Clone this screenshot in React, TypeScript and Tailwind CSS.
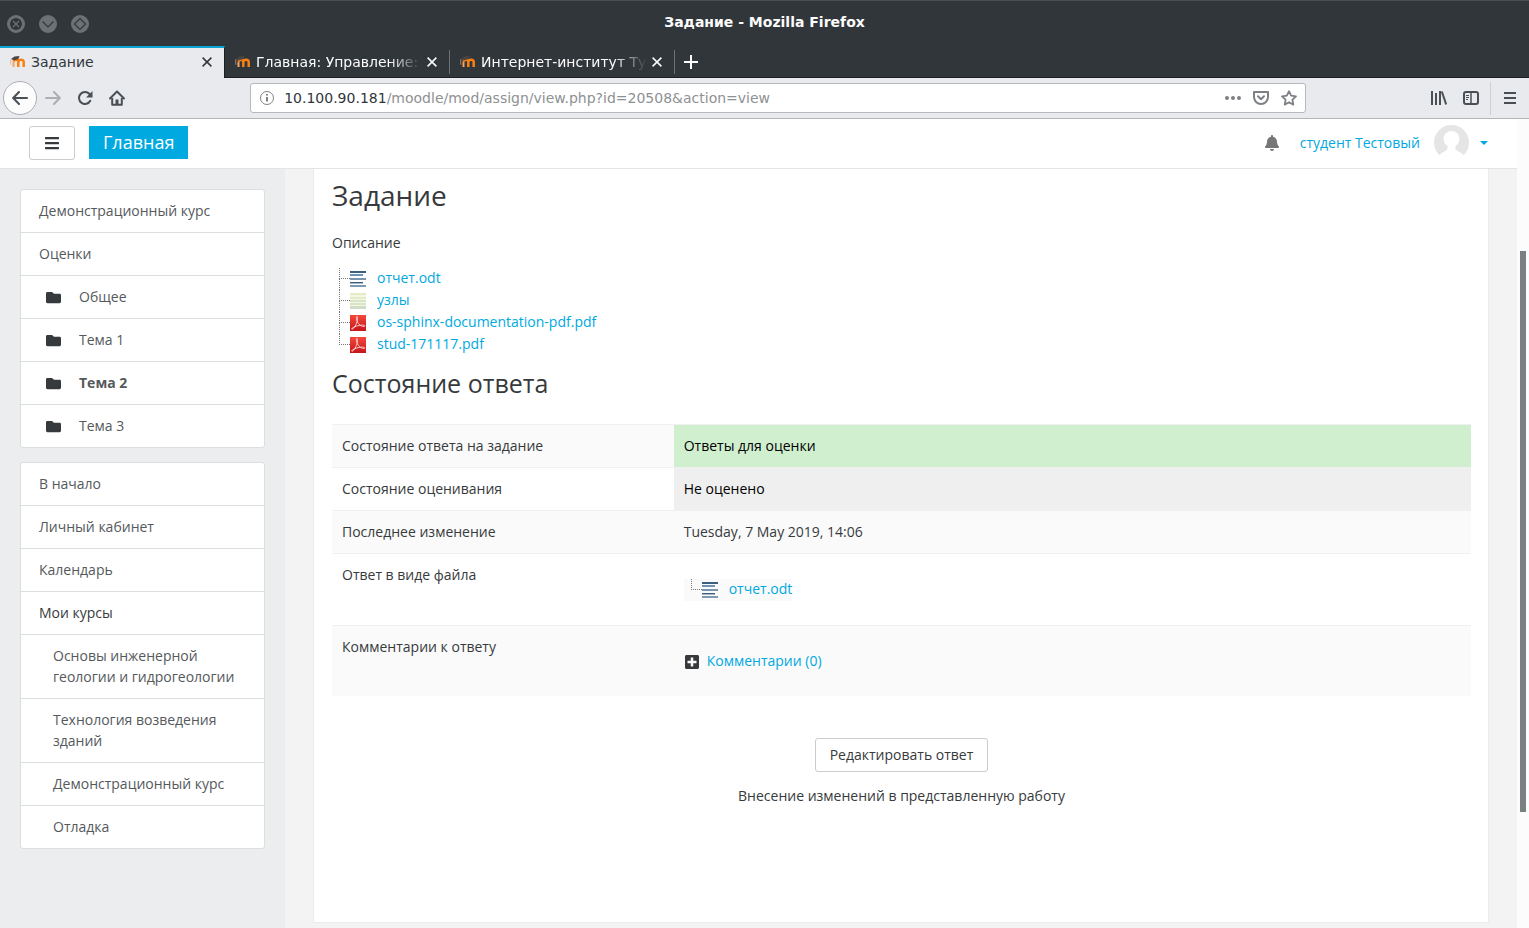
import { useState } from "react";
import type { ReactNode } from "react";
import { FaBars, FaBell, FaFolder, FaPlusSquare } from "react-icons/fa";

const tabs = [
  { title: "Задание", active: true },
  { title: "Главная: Управление:", active: false },
  { title: "Интернет-институт Ту", active: false },
];

const courseNav = [
  { title: "Демонстрационный курс" },
  { title: "Оценки" },
  { title: "Общее", folder: true },
  { title: "Тема 1", folder: true },
  { title: "Тема 2", folder: true, bold: true },
  { title: "Тема 3", folder: true },
];

const siteNav = [
  { title: "В начало" },
  { title: "Личный кабинет" },
  { title: "Календарь" },
  { title: "Мои курсы", dark: true },
  { title: "Основы инженерной геологии и гидрогеологии", nested: true },
  { title: "Технология возведения зданий", nested: true },
  { title: "Демонстрационный курс", nested: true },
  { title: "Отладка", nested: true },
];

type NavItem = { title: string; folder?: boolean; bold?: boolean; nested?: boolean; dark?: boolean };
type FileItem = { name: string; kind: "text" | "sheet" | "pdf" };

const files: FileItem[] = [
  { name: "отчет.odt", kind: "text" },
  { name: "узлы", kind: "sheet" },
  { name: "os-sphinx-documentation-pdf.pdf", kind: "pdf" },
  { name: "stud-171117.pdf", kind: "pdf" },
];

function WindowButton({ label, children }: { label: string; children: ReactNode }) {
  return (
    <button type="button" aria-label={label}>
      <svg width="18" height="18" viewBox="0 0 18 18" fill="none" stroke="#31363b" strokeWidth="1.2">
        {children}
      </svg>
    </button>
  );
}

function Favicon() {
  return (
    <svg width="16" height="16" viewBox="0 0 16 16" fill="none" className="shrink-0">
      <path d="M3.500 13V7.500" stroke="#f9a35c" strokeWidth="2" />
      <path d="M8.300 13V7.600C8.300 5.200 4 5 3.800 7.600M8.300 7.800c.2-2.800 5.400-2.800 5.400.2v5" stroke="#f98012" strokeWidth="2.500" />
      <path d="M1 5L4.500 2.600l5-.6-1.300 3.200L4 6.200z" fill="#4a4543" />
      <path d="M.9 5.200c-.4 1.800-.4 3.600 0 5.600" stroke="#c9ab92" strokeWidth=".7" />
    </svg>
  );
}

function CloseIcon() {
  return (
    <svg width="10" height="10" viewBox="0 0 10 10" stroke="currentColor" strokeWidth="1.5">
      <path d="M.6.6l8.800 8.800M9.400.6L.6 9.400" />
    </svg>
  );
}

function FileIcon({ kind }: { kind: FileItem["kind"] }) {
  if (kind === "pdf") {
    return (
      <svg width="16" height="16" viewBox="0 0 16 16" className="shrink-0">
        <defs>
          <linearGradient id="pdf" x1="0" y1="0" x2="0" y2="1">
            <stop offset="0" stopColor="#f5483c" />
            <stop offset="1" stopColor="#c4161c" />
          </linearGradient>
        </defs>
        <path d="M0 0h16v16H0z" fill="url(#pdf)" />
        <path
          d="M6.800 1.500c-.9.300-.2 3.500.6 5.300 1.200 2.700 4.200 4.900 6.800 4.700 1.200-.2.700-1.400-1.500-1.400-3.600 0-8.200 1.300-10.500 3-1 .9-.3 1.700.7.800C5 12.200 7.400 7.500 7.500 3.500c0-1.300-.2-2.100-.7-2z"
          fill="none"
          stroke="#fbd5d2"
          strokeWidth=".9"
        />
      </svg>
    );
  }
  if (kind === "sheet") {
    return (
      <svg width="16" height="16" viewBox="0 0 16 16" className="shrink-0">
        <path d="M0 0h16v16H0z" fill="#f3f7e6" />
        <path d="M0 0h16v2H0zM0 4h16v2H0z" fill="#e3ebc6" />
        <path d="M0 7h16v2H0zM0 10h16v2H0z" fill="#d9e3c6" />
        <path d="M0 13h16v3H0z" fill="#cfdcc8" />
      </svg>
    );
  }
  return (
    <svg width="16" height="16" viewBox="0 0 16 16" className="shrink-0">
      <path d="M0 0h16v2H0zM0 11h13v1H0z" fill="#3a5f80" />
      <path d="M0 3h13v2H0z" fill="#6f93b4" />
      <path d="M0 7h16v2H0z" fill="#7895ad" />
      <path d="M0 14h16v2H0z" fill="#7f9bb2" />
      <path d="M0 12h13v1H0z" fill="#a3b7c8" />
    </svg>
  );
}

function FileTree({ items }: { items: FileItem[] }) {
  return (
    <ul>
      {items.map((file, index) => (
        <li key={file.name} className="flex h-[22px] items-center">
          <div className="ml-[7px] h-[22px] w-[11px] shrink-0">
            <div className="h-[11px] border-b border-l border-dotted border-[#777]"></div>
            {index < items.length - 1 && <div className="h-[11px] border-l border-dotted border-[#777]"></div>}
          </div>
          <FileIcon kind={file.kind} />
          <a href="#" className="ml-[11px] pb-[3px] text-[#00a9e0]">{file.name}</a>
        </li>
      ))}
    </ul>
  );
}

function NavList({ items }: { items: NavItem[] }) {
  return (
    <ul className="rounded-[3px] border border-[#dcdddd] bg-white">
      {items.map((item) => (
        <li key={item.title} className="border-b border-[#dcdddd] last:border-b-0">
          <a
            href="#"
            className={`flex items-center pt-2.5 pr-[18px] pb-[11px] ${item.nested ? "pl-8" : "pl-[18px]"} ${
              item.dark ? "text-[#373a3c]" : "text-[#55595c]"
            } ${item.bold ? "font-bold" : ""}`}
          >
            {item.folder && (
              <span className="w-10 shrink-0 pt-px pl-[7px] text-[#373a3c]">
                <FaFolder size={15} />
              </span>
            )}
            {item.title}
          </a>
        </li>
      ))}
    </ul>
  );
}

function StatusRow({ label, shaded, children }: { label: string; shaded?: boolean; children: ReactNode }) {
  return (
    <tr className={shaded ? "bg-[#fafafa]" : "bg-white"}>
      <th scope="row" className="w-[30%] border-t border-[#f0f0f0] px-2.5 pt-2.5 pb-[11px] text-left align-top font-normal">
        {label}
      </th>
      {children}
    </tr>
  );
}

function Browser() {
  return (
    <header className="shrink-0 font-['DejaVu_Sans','Noto_Sans',sans-serif]">
      <div className="grid h-[46px] grid-cols-3 items-center border-t border-[#4a4f54] bg-[#31363b] px-[7px]">
        <div className="flex gap-3.5">
          <WindowButton label="Закрыть окно">
            <circle cx="9" cy="9" r="7.500" stroke="#6d7175" strokeWidth="3" />
            <path d="M6 6l6 6M12 6l-6 6" stroke="#6d7175" />
          </WindowButton>
          <WindowButton label="Свернуть">
            <circle cx="9" cy="9" r="9" fill="#6d7175" stroke="none" />
            <path d="M3.500 6.500L9 12l5.500-5.500" />
          </WindowButton>
          <WindowButton label="Развернуть">
            <circle cx="9" cy="9" r="9" fill="#6d7175" stroke="none" />
            <path d="M9 3.500L14.500 9 9 14.500 3.500 9z" />
          </WindowButton>
        </div>
        <div className="pb-[3px] text-center text-[14px] font-bold whitespace-nowrap text-[#fcfcfc]">Задание - Mozilla Firefox</div>
      </div>
      <div className="flex h-8 bg-[#31363b]">
        {tabs.map((tab) => (
          <div
            key={tab.title}
            className={`flex w-[225px] items-center pl-2.5 ${
              tab.active
                ? "border-t-2 border-r border-t-[#0aa5d6] border-r-[#1d2023] bg-[#e9eaee] pb-0.5 text-[#31363b]"
                : "border-b border-b-[#1d2023] pt-px text-[#fcfcfc]"
            }`}
          >
            <Favicon />
            <span
              className={`ml-[5px] w-[166px] overflow-hidden text-[14px] whitespace-nowrap ${
                tab.active ? "" : "mask-r-from-80% mask-r-to-100%"
              }`}
            >
              {tab.title}
            </span>
            <button type="button" aria-label="Закрыть вкладку" className="ml-[5px]">
              <CloseIcon />
            </button>
            {!tab.active && <span className="ml-auto h-6 w-px bg-[#6d7175]"></span>}
          </div>
        ))}
        <button type="button" aria-label="Новая вкладка" className="flex flex-1 items-center border-b border-[#1d2023] pl-[9px] text-[#fcfcfc]">
          <svg width="14" height="14" viewBox="0 0 14 14" stroke="currentColor" strokeWidth="2">
            <path d="M7 0v14M0 7h14" />
          </svg>
        </button>
      </div>
      <div className="flex h-[41px] items-center border-b border-[#b5b5b7] bg-[#e9eaee] pr-[13px] pl-[3px] text-[#4a4f54]">
        <button type="button" aria-label="Назад" className="flex size-[34px] items-center justify-center rounded-full border border-[#adaeb2] bg-[#fcfcfc]">
          <svg width="16" height="16" viewBox="0 0 16 16" fill="none" stroke="currentColor" strokeWidth="2" strokeLinecap="round">
            <path d="M15 8H1.500M7 2L1.200 8 7 14" />
          </svg>
        </button>
        <button type="button" aria-label="Вперёд" className="ml-2 text-[#adaeb2]">
          <svg width="16" height="16" viewBox="0 0 16 16" fill="none" stroke="currentColor" strokeWidth="2" strokeLinecap="round">
            <path d="M1 8h13.500M9 2l5.800 6L9 14" />
          </svg>
        </button>
        <button type="button" aria-label="Обновить" className="ml-4">
          <svg width="16" height="16" viewBox="0 0 16 16" fill="none" stroke="currentColor" strokeWidth="2">
            <path d="M13.300 10.800A6 6 0 1 1 12.500 4" strokeLinecap="round" />
            <path d="M15.500 1v6.500H9z" fill="currentColor" stroke="none" />
          </svg>
        </button>
        <button type="button" aria-label="Домой" className="ml-4">
          <svg width="16" height="16" viewBox="0 0 16 16" fill="none" stroke="currentColor" strokeWidth="2" strokeLinejoin="round">
            <path d="M1 8.500L8 1.500l7 7" strokeLinecap="round" />
            <path d="M3.200 8v6.800h9.600V8" />
            <path d="M6.500 15V9.500h3V15z" fill="currentColor" stroke="none" />
          </svg>
        </button>
        <div className="flex-[125]"></div>
        <div className="flex h-[30px] flex-[1036] items-center rounded-[3px] border border-[#b8b9bc] bg-white px-2 text-[14px]">
          <svg width="16" height="16" viewBox="0 0 16 16" className="shrink-0" fill="none" stroke="#7f8387">
            <circle cx="8" cy="8" r="6.500" />
            <path d="M8 7v4.500M8 4v1.600" strokeWidth="2" />
          </svg>
          <span className="ml-[9px] text-[#31363b]">10.100.90.181</span>
          <input
            type="text"
            aria-label="Адрес"
            defaultValue="/moodle/mod/assign/view.php?id=20508&action=view"
            className="min-w-0 flex-1 text-[#8e9193] outline-none"
          />
          <div className="flex items-center gap-3 text-[#7d8085]">
            <button type="button" aria-label="Действия">
              <svg width="16" height="16" viewBox="0 0 16 16" fill="currentColor">
                <circle cx="2" cy="8" r="2" />
                <circle cx="8" cy="8" r="2" />
                <circle cx="14" cy="8" r="2" />
              </svg>
            </button>
            <button type="button" aria-label="Pocket">
              <svg width="16" height="16" viewBox="0 0 16 16" fill="none" stroke="currentColor" strokeWidth="2" strokeLinecap="round" strokeLinejoin="round">
                <path d="M1 2h14v5a7 7 0 0 1-14 0z" />
                <path d="M5 6.300L8 9.300l3-3" />
              </svg>
            </button>
            <button type="button" aria-label="Закладка">
              <svg width="16" height="16" viewBox="0 0 16 16" fill="none" stroke="currentColor" strokeWidth="1.800" strokeLinejoin="round">
                <path d="M8 1.200l2.100 4.500 4.900.6-3.600 3.400.9 4.900L8 12.200l-4.300 2.400.9-4.900L1 6.300l4.900-.6z" />
              </svg>
            </button>
          </div>
        </div>
        <div className="flex-[125]"></div>
        <button type="button" aria-label="Библиотека">
          <svg width="16" height="16" viewBox="0 0 16 16" fill="none" stroke="currentColor" strokeWidth="2">
            <path d="M1 1v14M5 3v12M9 1v14" />
            <path d="M10.800 1.500L15.200 14.500" />
          </svg>
        </button>
        <button type="button" aria-label="Боковая панель" className="ml-4">
          <svg width="16" height="16" viewBox="0 0 16 16" fill="none" stroke="currentColor">
            <rect x="1" y="2" width="14" height="12" rx="2" strokeWidth="2" />
            <path d="M8 2v12" strokeWidth="1.500" />
            <path d="M3 5.500h3M3 7.500h3M3 9.500h2" />
          </svg>
        </button>
        <div className="ml-[11px] h-[33px] w-px bg-[#cfd0d4]"></div>
        <button type="button" aria-label="Меню" className="ml-[13px]">
          <svg width="12" height="12" viewBox="0 0 12 12" stroke="currentColor" strokeWidth="2">
            <path d="M0 1h12M0 6h12M0 11h12" />
          </svg>
        </button>
      </div>
    </header>
  );
}

export default function App() {
  const [commentsOpen, setCommentsOpen] = useState(false);

  return (
    <div className="flex h-screen flex-col overflow-hidden bg-white font-['Open_Sans',sans-serif] text-[14px] leading-[21px] text-[#373a3c]">
      <Browser />
      <div className="flex min-h-0 flex-1">
        <div className="flex min-w-0 flex-1 flex-col">
          <nav className="flex h-[50px] shrink-0 items-center border-b border-[#e3e4e5] px-[29px] pb-0.5">
            <button type="button" aria-label="Меню курса" className="flex h-[34px] w-[46px] items-center justify-center rounded-[3px] border border-[#ccc]">
              <FaBars size={16} />
            </button>
            <a href="#" className="ml-3.5 flex h-[33px] items-center bg-[#00a9e0] px-3.5 text-[18px] text-white">Главная</a>
            <button type="button" aria-label="Уведомления" className="ml-auto text-[#767676]">
              <FaBell size={16} />
            </button>
            <a href="#" className="ml-5 text-[#00a9e0]">студент Тестовый</a>
            <svg width="35" height="35" viewBox="0 0 35 35" className="ml-3.5">
              <circle cx="17.500" cy="17.500" r="17.500" fill="#e5e5e5" />
              <circle cx="17.500" cy="14" r="8" fill="#fff" />
              <path d="M3 35c2-6 5-7.500 8.500-9l2-2v-5h8v5l2 2c3.500 1.500 6.500 3 8.500 9z" fill="#fff" />
            </svg>
            <button type="button" aria-label="Меню пользователя" className="ml-[11px] border-x-4 border-t-4 border-x-transparent border-t-[#00a9e0]"></button>
          </nav>
          <div className="flex min-h-0 flex-1">
            <aside className="flex w-[285px] shrink-0 flex-col gap-3.5 bg-[#ecedef] p-5">
              <NavList items={courseNav} />
              <NavList items={siteNav} />
            </aside>
            <div className="flex min-w-0 flex-1 flex-col bg-[#f3f3f3] px-7 pb-[5px]">
              <main className="flex-1 border-x border-b border-[#ececec] bg-white pr-[17px] pl-[18px]">
                <h2 className="pt-[9px] text-[28px] leading-[34px]">Задание</h2>
                <p className="mt-5 mb-[15px]">Описание</p>
                <FileTree items={files} />
                <h3 className="mt-3 text-[25px] leading-[30px]">Состояние ответа</h3>
                <table className="mt-[26px] w-full border-collapse">
                  <tbody>
                    <StatusRow label="Состояние ответа на задание" shaded>
                      <td className="border-t border-[#f0f0f0] bg-[#cfefcf] px-2.5 pt-2.5 pb-[11px] text-black">Ответы для оценки</td>
                    </StatusRow>
                    <StatusRow label="Состояние оценивания">
                      <td className="border-t border-[#f0f0f0] bg-[#efefef] px-2.5 pt-2.5 pb-[11px] text-black">Не оценено</td>
                    </StatusRow>
                    <StatusRow label="Последнее изменение" shaded>
                      <td className="border-t border-[#f0f0f0] px-2.5 pt-2.5 pb-[11px]">Tuesday, 7 May 2019, 14:06</td>
                    </StatusRow>
                    <StatusRow label="Ответ в виде файла">
                      <td className="border-t border-[#f0f0f0] px-2.5 pt-[25px] pb-6">
                        <div className="w-fit bg-[#fafafa]">
                          <FileTree items={[{ name: "отчет.odt", kind: "text" }]} />
                        </div>
                      </td>
                    </StatusRow>
                    <StatusRow label="Комментарии к ответу" shaded>
                      <td className="border-t border-[#f0f0f0] px-2.5 pt-6 pb-[23px]">
                        <button
                          type="button"
                          aria-expanded={commentsOpen}
                          className="flex items-center gap-[7px]"
                          onClick={() => setCommentsOpen(!commentsOpen)}
                        >
                          <FaPlusSquare size={16} />
                          <span className="pb-0.5 text-[#00a9e0]">Комментарии (0)</span>
                        </button>
                      </td>
                    </StatusRow>
                  </tbody>
                </table>
                <div className="mt-[42px] flex flex-col items-center gap-[13px]">
                  <button type="button" className="h-[34px] rounded-[3px] border border-[#ccc] bg-white px-3.5 pb-0.5">Редактировать ответ</button>
                  <p>Внесение изменений в представленную работу</p>
                </div>
              </main>
            </div>
          </div>
        </div>
        <div className="flex w-3 shrink-0 flex-col items-center bg-[#fcfcfc]">
          <div className="flex-[132]"></div>
          <div className="w-1.5 flex-[561] bg-[#7a7f82]"></div>
          <div className="flex-[116]"></div>
        </div>
      </div>
    </div>
  );
}
